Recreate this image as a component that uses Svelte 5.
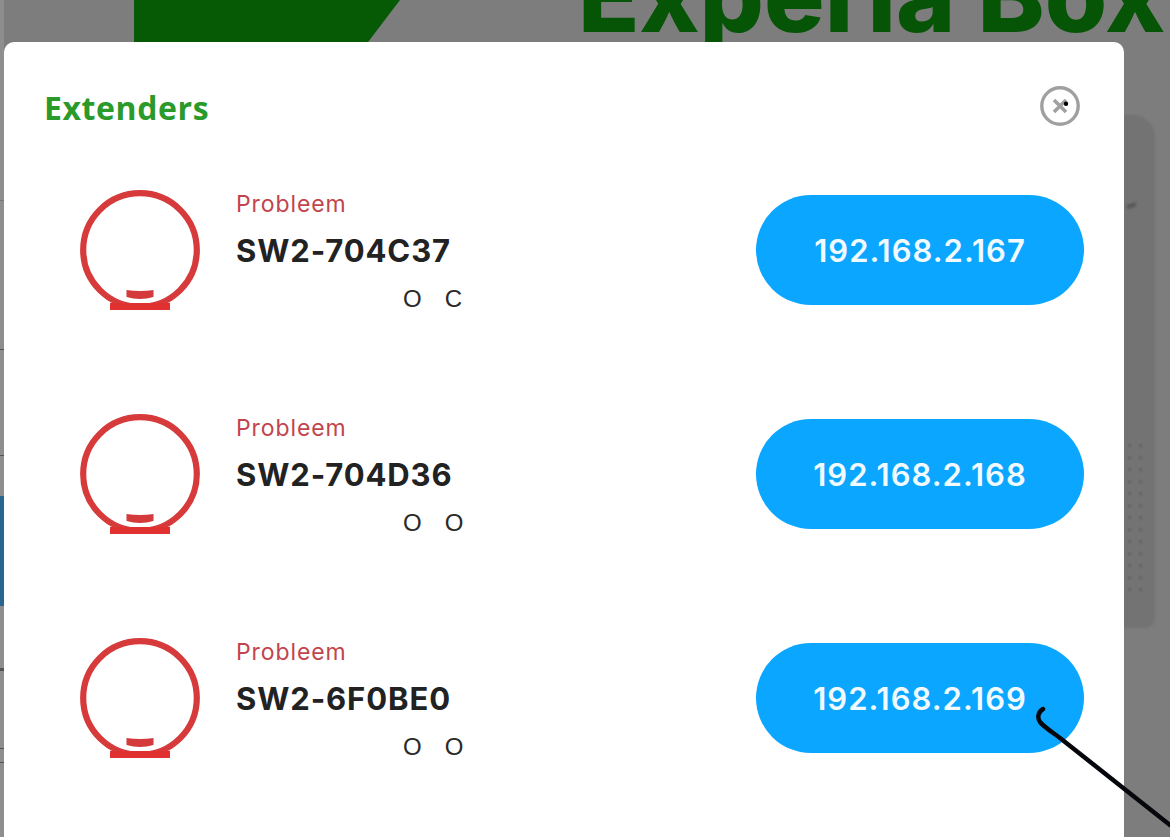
<script>
	const extenders = [
		{ name: "SW2-704C37", ip: "192.168.2.167", marks: ["O", "C"] },
		{ name: "SW2-704D36", ip: "192.168.2.168", marks: ["O", "O"] },
		{ name: "SW2-6F0BE0", ip: "192.168.2.169", marks: ["O", "O"] }
	];

	const dots = Array.from({ length: 26 });
</script>

<div class="page">
	<!-- dimmed page behind the dialog -->
	<div class="backdrop">
		<div class="banner"></div>
		<div class="headline">Experia Box</div>
		<div class="device">
			<span class="device-label">del</span>
			<div class="device-dots">
				{#each dots as _}
					<i></i>
				{/each}
			</div>
		</div>
		<div class="strip"></div>
		<div class="tick t0"></div>
		<div class="tick t1"></div>
		<div class="tick t2"></div>
		<div class="tick t3"></div>
		<div class="tick t4"></div>
		<div class="tick t5"></div>
	</div>

	<div class="modal">
		<header class="modal-head">
			<h2>Extenders</h2>
			<button class="close" type="button" aria-label="Sluiten">
				<svg width="40" height="40" viewBox="0 0 40 40">
					<circle cx="20" cy="20" r="18.2" fill="none" stroke="#a0a0a0" stroke-width="3.4" />
					<path d="M14 14 L26 26 M26 14 L14 26" stroke="#a0a0a0" stroke-width="3.6" fill="none" />
					<circle cx="26" cy="17.7" r="2.2" fill="#000" />
				</svg>
			</button>
		</header>

		<ul class="list">
			{#each extenders as ext}
				<li class="row">
					<svg class="status" width="120" height="120" viewBox="0 0 120 120">
						<circle cx="60" cy="60" r="56.8" fill="none" stroke="#d63a3a" stroke-width="6.2" />
						<rect x="30" y="113" width="60" height="7" fill="#e03030" />
						<path d="M46.5 100 Q60 102 73.500 100 V107 Q60 111 46.500 107 Z" fill="#d4393c" />
					</svg>
					<div class="info">
						<span class="state">Probleem</span>
						<span class="name">{ext.name}</span>
						<span class="marks">
							{#each ext.marks as m}
								<span>{m}</span>
							{/each}
						</span>
					</div>
					<button class="ip" type="button">{ext.ip}</button>
				</li>
			{/each}
		</ul>
	</div>

	<!-- pen stroke drawn over the screenshot -->
	<svg class="pen" width="1170" height="837" viewBox="0 0 1170 837">
		<path
			d="M1043 709 C1038 712 1037 718 1040 722 C1044 727 1052 732 1060 738 L1170 825"
			fill="none"
			stroke="#05070c"
			stroke-width="4.500"
			stroke-linecap="round"
		/>
	</svg>
</div>

<style>
	:global(body) {
		margin: 0;
		background: #7f7f7f;
	}

	.page {
		position: relative;
		width: 1170px;
		height: 837px;
		overflow: hidden;
		background: #7d7d7d;
		font-family: Inter, "Liberation Sans", sans-serif;
		padding: 42px 46px 0 4px;
		box-sizing: border-box;
	}

	.backdrop {
		position: absolute;
		inset: 0;
		background: linear-gradient(90deg, #8e8e8e 0 4px, transparent 4px);
	}

	.banner {
		position: absolute;
		left: 134px;
		top: 0;
		width: 266px;
		height: 42px;
		background: #065a06;
		clip-path: polygon(0 0, 100% 0, 88% 100%, 0 100%);
	}

	.headline {
		position: absolute;
		left: 578px;
		top: -61px;
		font-size: 101px;
		line-height: 113px;
		font-weight: 800;
		color: #065406;
		white-space: nowrap;
	}

	.device {
		position: absolute;
		left: 1090px;
		top: 115px;
		width: 65px;
		height: 513px;
		background: #737373;
		border-radius: 0 22px 10px 0;
		filter: blur(1px);
	}

	.device-label {
		position: absolute;
		left: 36px;
		top: 86px;
		font-size: 7px;
		color: #333;
		transform: rotate(-18deg);
	}

	.device-dots {
		position: absolute;
		left: 38px;
		top: 329px;
		display: grid;
		grid-template-columns: 3px 3px;
		column-gap: 8px;
		row-gap: 9px;
	}

	.device-dots i {
		width: 3px;
		height: 3px;
		border-radius: 50%;
		background: #5e5e5e;
	}

	.strip {
		position: absolute;
		left: 0;
		top: 496px;
		width: 4px;
		height: 110px;
		background: #28668f;
	}

	.tick {
		position: absolute;
		left: 0;
		width: 4px;
		height: 1px;
		background: #555;
	}

	.t0 { top: 200px; background: #777; }
	.t1 { top: 349px; }
	.t2 { top: 455px; }
	.t3 { top: 668px; height: 3px; }
	.t4 { top: 748px; }
	.t5 { top: 762px; }

	.modal {
		position: relative;
		width: 1120px;
		height: 830px;
		background: #fff;
		border-radius: 10px;
		box-sizing: border-box;
		padding: 44px 40px 0 40px;
	}

	.modal-head {
		display: flex;
		align-items: center;
		justify-content: space-between;
		height: 40px;
		padding-right: 4px;
	}

	h2 {
		margin: 0;
		font-family: "Open Sans", sans-serif;
		font-size: 32px;
		font-weight: 700;
		letter-spacing: 0.6px;
		color: #2a9a2a;
		transform: translateY(1px);
	}

	.close {
		width: 40px;
		height: 40px;
		padding: 0;
		border: none;
		background: none;
		line-height: 0;
	}

	.list {
		list-style: none;
		margin: 0;
		padding: 0 0 0 35px;
		position: absolute;
		top: 148px;
		left: 41px;
		right: 40px;
		display: flex;
		flex-direction: column;
		gap: 104px;
	}

	.row {
		display: flex;
		align-items: center;
		height: 120px;
	}

	.status {
		flex: none;
		margin-right: 36px;
	}

	.info {
		display: flex;
		flex-direction: column;
		flex: 1;
	}

	.state {
		font-size: 23px;
		line-height: 28px;
		color: #c2444c;
		letter-spacing: 0.9px;
	}

	.name {
		margin-top: 14px;
		font-size: 31px;
		line-height: 38px;
		font-weight: 700;
		color: #222;
		letter-spacing: 0.9px;
	}

	.marks {
		display: flex;
		gap: 23px;
		margin: 17px 0 0 167px;
		font-size: 24px;
		line-height: 24px;
		color: #2a2a2a;
		font-family: "Liberation Sans", sans-serif;
	}

	.ip {
		flex: none;
		width: 328px;
		height: 110px;
		border: none;
		border-radius: 55px;
		background: #0aa6ff;
		color: #f0faff;
		font-family: Inter, sans-serif;
		font-size: 31px;
		font-weight: 600;
		letter-spacing: 1px;
	}

	.pen {
		position: absolute;
		left: 0;
		top: 0;
		pointer-events: none;
	}
</style>
